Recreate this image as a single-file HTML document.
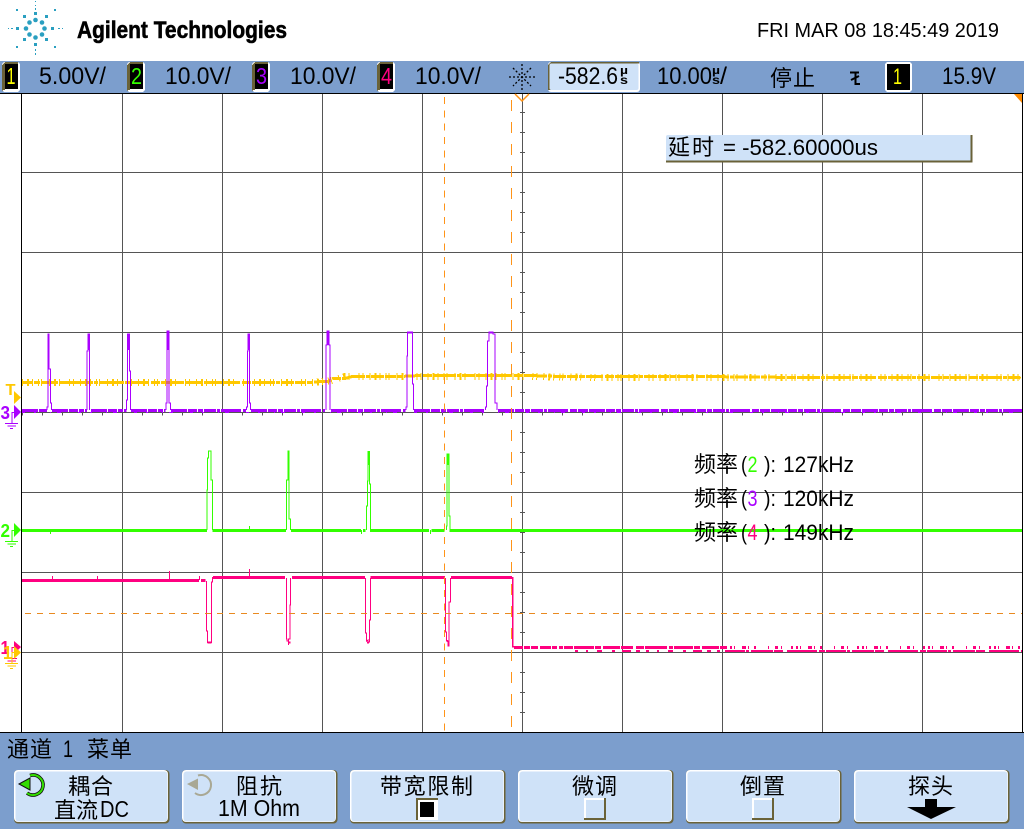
<!DOCTYPE html>
<html><head><meta charset="utf-8"><style>
html,body{margin:0;padding:0;background:#fff}
svg{display:block}
text{font-family:"Liberation Sans","WenQuanYi Zen Hei","Noto Sans CJK SC",sans-serif;fill:#000}
.g line{stroke:#555;stroke-width:1}
.c{shape-rendering:crispEdges}
</style></head><body>
<svg width="1024" height="829" viewBox="0 0 1024 829" xmlns="http://www.w3.org/2000/svg">
<rect width="1024" height="829" fill="#fff"/>
<!-- logo -->
<g fill="#2a9fc0">
<circle cx="35.500" cy="20" r="2.300"/><circle cx="42" cy="22.500" r="2.300"/><circle cx="29.500" cy="22.500" r="2.300"/><circle cx="44.500" cy="28.500" r="2.300"/><circle cx="26" cy="28.500" r="2.300"/><circle cx="29.500" cy="34.500" r="2.300"/><circle cx="42" cy="34.500" r="2.300"/><circle cx="35.500" cy="37.500" r="2.300"/>
<g class="c"><rect x="23" y="15" width="3" height="3"/><rect x="45" y="15" width="3" height="3"/><rect x="23" y="38" width="3" height="3"/><rect x="45" y="38" width="3" height="3"/><rect x="34" y="12" width="3" height="3"/><rect x="34" y="43" width="3" height="3"/><rect x="16" y="27" width="3" height="3"/><rect x="51" y="27" width="3" height="3"/>
<rect x="35" y="1" width="1" height="1"/><rect x="35" y="5" width="1" height="1"/><rect x="35" y="8" width="1" height="2"/><rect x="35" y="49" width="1" height="2"/><rect x="35" y="53" width="1" height="2"/>
<rect x="8" y="28" width="1" height="1"/><rect x="11" y="28" width="2" height="1"/><rect x="58" y="28" width="2" height="1"/><rect x="62" y="28" width="1" height="1"/>
<rect x="16" y="9" width="2" height="2"/><rect x="54" y="9" width="2" height="2"/><rect x="16" y="46" width="2" height="2"/><rect x="54" y="46" width="2" height="2"/></g>
</g>
<text x="77" y="38" font-size="24" font-weight="bold" textLength="210" lengthAdjust="spacingAndGlyphs" stroke="#000" stroke-width=".6">Agilent Technologies</text>
<text x="757" y="37" font-size="20" textLength="242" lengthAdjust="spacingAndGlyphs">FRI MAR 08 18:45:49 2019</text>

<!-- header band -->
<rect class="c" y="61" width="1024" height="32" fill="#7c9ecd"/>
<!-- bottom band -->
<rect class="c" y="733" width="1024" height="96" fill="#7c9ecd"/>

<!-- grid -->
<g class="g c">
<line x1="122.500" y1="94" x2="122.500" y2="732"/><line x1="222.500" y1="94" x2="222.500" y2="732"/><line x1="322.500" y1="94" x2="322.500" y2="732"/><line x1="422.500" y1="94" x2="422.500" y2="732"/><line x1="522.500" y1="94" x2="522.500" y2="732"/><line x1="622.500" y1="94" x2="622.500" y2="732"/><line x1="722.500" y1="94" x2="722.500" y2="732"/><line x1="822.500" y1="94" x2="822.500" y2="732"/><line x1="922.500" y1="94" x2="922.500" y2="732"/>
<line x1="22" y1="172.500" x2="1022" y2="172.500"/><line x1="22" y1="252.500" x2="1022" y2="252.500"/><line x1="22" y1="332.500" x2="1022" y2="332.500"/><line x1="22" y1="412.500" x2="1022" y2="412.500"/><line x1="22" y1="492.500" x2="1022" y2="492.500"/><line x1="22" y1="572.500" x2="1022" y2="572.500"/><line x1="22" y1="652.500" x2="1022" y2="652.500"/>
<path d="M520 112.500h5M520 132.500h5M520 152.500h5M520 192.500h5M520 212.500h5M520 232.500h5M520 272.500h5M520 292.500h5M520 312.500h5M520 352.500h5M520 372.500h5M520 392.500h5M520 432.500h5M520 452.500h5M520 472.500h5M520 512.500h5M520 532.500h5M520 552.500h5M520 592.500h5M520 612.500h5M520 632.500h5M520 672.500h5M520 692.500h5M520 712.500h5" stroke="#555" fill="none"/>
<line x1="22" y1="414" x2="1022" y2="414" stroke-dasharray="1 19" stroke-dashoffset="-20" style="stroke-width:3"/>
</g>
<g class="c" stroke="#000"><line x1="0" y1="93.500" x2="1024" y2="93.500"/><line x1="0" y1="732.500" x2="1024" y2="732.500"/><line x1="21.500" y1="93" x2="21.500" y2="733"/><line x1="1022.500" y1="93" x2="1022.500" y2="733"/></g>

<!-- yellow trace -->
<g class="c" fill="none" stroke="#ffc800">
<path d="M22 382.500H310L320 381.500H328L333 378.500H345L352 376.500H400L420 375.500H530L560 376.500H700L800 377.500H1019L1021 379" stroke-width="3" stroke-dasharray="11 1 6 1 17 2 9 1 23 1 4 1 13 1"/>
<path d="M22 382.500H310L330 381L345 376.500H530L600 377.500H1022" stroke-width="7" stroke-dasharray="1 4 2 3 1 5 1 2 1 7 1 4 2 3 1 9 1 3 1 6"/>
</g>
<!-- purple trace -->
<g fill="none" stroke="#aa00ff" class="c">
<path d="M22 410.500H47M52 410.500H87M91 410.500H126.500M131 410.500H165.500M171 410.500H246M251 410.500H325M331 410.500H405.500M414 410.500H484.500M498 410.500H1022" stroke-width="3" stroke-dasharray="16 1 9 1 5 1 12 1 3 1 20 2 7 1 10 1"/>
<path d="M22 412.500H1022" stroke-width="1" stroke-dasharray="3 9 2 14 1 6 4 17"/>
<path d="M47 410V407H48V334H49V369H50.500V403H51.500V410M87 410V351H88V334H89.500V410M126.500 410V400H127.500V334H129.500V371H130.500V410M166 410V403H167V331H169V403H170.500V410M246.500 410V407H247.500V351H248V334H249.500V403H250.500V410M326 410V345H327V331H329V345H330V410M406 410V407H407V356H407.500V332H412.500V384H413.500V410M485.500 410V407H486.500V386H487.500V341H489V332H493V334H495V403H497V410" stroke-width="1"/>
<path d="M408 332.500h4M488.500 332.500h4M48.500 334V350M88.500 334V350M128 334V350M168 331V350M248.500 334V350M328 331V345" stroke-width="2"/>
</g>
<!-- green trace -->
<g fill="none" stroke="#33ff00" class="c">
<path d="M22 530.500H207M212.500 530.500H286M291 530.500H361M363 530.500H365.500M370 530.500H429M431.500 530.500H444.500M449.500 530.500H1022" stroke-width="3"/>
<path d="M50.500 530V534M249.500 526V530M361.500 530V534M430.500 530V534" stroke-width="1"/>
<path d="M207 530V490H207.500V458H208.500V451H211V480H212.500V530" stroke-width="1"/>
<path d="M286.500 530V480H288V451H289V519H290.500V530M366.500 530V506H367.500V481H368V451.500H369.500V484H370.500V530M446.500 530V526H447V454H449V516H450V530" stroke-width="1"/>
<path d="M288.500 451V465M368.500 452V465M447.500 454V465" stroke-width="2"/>
</g>
<!-- pink trace -->
<g fill="none" stroke="#ff0080" class="c">
<path d="M22 580.500H199M201 580.500H205.500M213 577.500H285M292 577.500H365M370.500 577.500H445M451 577.500H512" stroke-width="3"/>
<path d="M52.500 576V580M97.500 576V580M169.500 571V579M199.500 576V580M249.500 569V577" stroke-width="1"/>
<path d="M206.500 581V631H207.500V642.500H211.500V582H212.500V577M286.500 578V639H287V641H288.500V645V639H290V605H290.500V578M365.500 578V633H366.500V641L368 640V642H369.500V642V620H370.500V578M445.500 578V632H446.500V641H448V646H449V602H450.500V578" stroke-width="1"/>
<path d="M207.500 642.500h4M289 642.500h1.500M367 642.500h2M447 641h1" stroke-width="2"/>
<path d="M512.500 577V646.500H515" stroke-width="1.500"/>
<path d="M514 647.500H575" stroke-width="3" stroke-dasharray="9 1 6 1 7 2 11 1 5 2 4 1"/>
<path d="M575 647.500H725" stroke-width="3" stroke-dasharray="19 1 6 2 17 1 12 3 8 1 22 2 4 1"/>
<path d="M725 647.500H1022" stroke-width="3" stroke-dasharray="2 3 2 2 1 7 4 2 1 5 2 12 1 6 3 3 1 9"/>
<path d="M575 651H725" stroke-width="2" stroke-dasharray="3 8 2 9 5 10 3 7 9 5 4 6"/>
<path d="M725 651H1022" stroke-width="2" stroke-dasharray="20 1 3 2 22 1 9 4 30 2 6 1"/>
</g>

<!-- orange markers -->
<g class="c" fill="none" stroke="#ff9418">
<line x1="444.500" y1="97" x2="444.500" y2="732" stroke-width="1" stroke-dasharray="7 6.330"/>
<line x1="511.500" y1="100" x2="511.500" y2="732" stroke-width="1" stroke-dasharray="11 11"/>
<line x1="25" y1="613.500" x2="1022" y2="613.500" stroke="#e98a20" stroke-dasharray="6 6"/>
</g>
<path d="M515 94L522 101L529 94" fill="none" stroke="#ff9418" stroke-width="1.500"/>
<path d="M1014 94H1022V103Z" fill="#ff8a00"/>

<!-- left markers -->
<text x="5.500" y="395" font-size="16" font-weight="bold" style="fill:#ffc800" textLength="10" lengthAdjust="spacingAndGlyphs">T</text>
<path d="M14 391L21 397.500L14 404Z" fill="#ffc800"/>
<text x="0.500" y="419" font-size="18" font-weight="bold" style="fill:#aa00ff" textLength="9.500" lengthAdjust="spacingAndGlyphs">3</text>
<path d="M14 405L21 412L14 419Z" fill="#aa00ff"/>
<path d="M18 412.500H12V423M5 423.500H18M7.500 426H16M10 428.500H13" fill="none" stroke="#aa00ff" stroke-width="1"/>
<text x="0.500" y="537" font-size="18" font-weight="bold" style="fill:#33ff00" textLength="9.500" lengthAdjust="spacingAndGlyphs">2</text>
<path d="M14 523L21 530L14 537Z" fill="#33ff00"/>
<path d="M18 530.500H12V541M5 541.500H18M7.500 544H16M10 546.500H13" fill="none" stroke="#33ff00" stroke-width="1"/>
<text x="0.500" y="654" font-size="18" font-weight="bold" style="fill:#ff0080" textLength="9" lengthAdjust="spacingAndGlyphs">1</text>
<path d="M14 641L21 647L14 654Z" fill="#ff0080"/>
<path d="M18 647.500H12V658M7 658.500H17M7.500 661H16" fill="none" stroke="#ff0080" stroke-width="1"/>
<text x="3" y="659" font-size="18" font-weight="bold" style="fill:#ffc800" textLength="9" lengthAdjust="spacingAndGlyphs">1</text>
<path d="M14 646L21 652.500L14 659Z" fill="#ffc800"/>
<path d="M18 652.500H12V663M5 663.500H18M7.500 666H16M10 668.500H13" fill="none" stroke="#ffc800" stroke-width="1"/>

<!-- header controls -->
<g class="c">
<rect x="2" y="62" width="18" height="30" rx="3" fill="#fff"/><path d="M2 91V65L5 62H18V64H5V90H3Z" fill="#6a6238"/><rect x="5" y="64" width="13" height="25" fill="#000"/>
<rect x="127" y="62" width="18" height="30" rx="3" fill="#fff"/><path d="M127 91V65L130 62H143V64H130V90H128Z" fill="#6a6238"/><rect x="130" y="64" width="13" height="25" fill="#000"/>
<rect x="252" y="62" width="18" height="30" rx="3" fill="#fff"/><path d="M252 91V65L255 62H268V64H255V90H253Z" fill="#6a6238"/><rect x="255" y="64" width="13" height="25" fill="#000"/>
<rect x="377" y="62" width="18" height="30" rx="3" fill="#fff"/><path d="M377 91V65L380 62H393V64H380V90H378Z" fill="#6a6238"/><rect x="380" y="64" width="13" height="25" fill="#000"/>
<rect x="885" y="62" width="27" height="30" rx="3" fill="#fff"/><rect x="887" y="64" width="23" height="26" fill="#000"/>
</g>
<text x="6.500" y="84" font-size="23" style="fill:#ffff00" textLength="9" lengthAdjust="spacingAndGlyphs">1</text>
<text x="131" y="84" font-size="23" style="fill:#33ff00" textLength="11" lengthAdjust="spacingAndGlyphs">2</text>
<text x="256" y="84" font-size="23" style="fill:#aa00ff" textLength="11" lengthAdjust="spacingAndGlyphs">3</text>
<text x="381" y="84" font-size="23" style="fill:#ff0080" textLength="11" lengthAdjust="spacingAndGlyphs">4</text>
<text x="893" y="84" font-size="22" style="fill:#ffff00" textLength="9" lengthAdjust="spacingAndGlyphs">1</text>
<text x="39" y="84" font-size="24" textLength="67" lengthAdjust="spacingAndGlyphs">5.00V/</text>
<text x="165" y="84" font-size="24" textLength="66" lengthAdjust="spacingAndGlyphs">10.0V/</text>
<text x="290" y="84" font-size="24" textLength="66" lengthAdjust="spacingAndGlyphs">10.0V/</text>
<text x="415" y="84" font-size="24" textLength="66" lengthAdjust="spacingAndGlyphs">10.0V/</text>
<path d="M522 64V90M509 77H535M513 68L531 86M531 68L513 86" stroke="#000" stroke-width="1.300" stroke-dasharray="2 2" fill="none"/>
<rect x="548" y="62" width="92" height="30" rx="3" fill="#fff"/>
<path d="M548 90V65L551 62H639V63.500H551V90Z" fill="#6a6238"/>
<rect x="549.500" y="63.500" width="89" height="26.500" rx="2" fill="#cfe2f8"/>
<text x="558" y="84" font-size="24" textLength="60" lengthAdjust="spacingAndGlyphs">-582.6</text>
<text x="620" y="74" font-size="11" font-weight="bold" textLength="8" lengthAdjust="spacingAndGlyphs">µ</text>
<text x="620" y="84" font-size="12" font-weight="bold" textLength="8" lengthAdjust="spacingAndGlyphs">s</text>
<text x="657" y="84" font-size="24" textLength="55" lengthAdjust="spacingAndGlyphs">10.00</text>
<text x="712" y="74" font-size="11" font-weight="bold" textLength="8" lengthAdjust="spacingAndGlyphs">µ</text>
<text x="712" y="84" font-size="12" font-weight="bold" textLength="8" lengthAdjust="spacingAndGlyphs">s</text>
<text x="720" y="84" font-size="24" textLength="7" lengthAdjust="spacingAndGlyphs">/</text>
<text x="770" y="86" font-size="22" textLength="45" lengthAdjust="spacing">停止</text>
<path d="M850 72.500H859M855.500 72V84H860M851 80L859 76" fill="none" stroke="#000" stroke-width="2"/>
<text x="942" y="84" font-size="24" textLength="54" lengthAdjust="spacingAndGlyphs">15.9V</text>

<!-- delay box -->
<rect x="666" y="135" width="305" height="26.500" rx="2" fill="#cfe2f8"/>
<path d="M666 161.500H971.500V135" fill="none" stroke="#6a6238" stroke-width="2"/>
<text x="668" y="155" font-size="22" textLength="46" lengthAdjust="spacing">延时</text>
<text x="723" y="155" font-size="22" textLength="155" lengthAdjust="spacingAndGlyphs">= -582.60000us</text>

<!-- frequency -->
<text x="694" y="472" font-size="22" textLength="44" lengthAdjust="spacing">频率</text>
<text x="741" y="472" font-size="22" textLength="6" lengthAdjust="spacingAndGlyphs">(</text>
<text x="747.500" y="472" font-size="22" style="fill:#33ff00" textLength="10" lengthAdjust="spacingAndGlyphs">2</text>
<text x="764" y="472" font-size="22" textLength="12" lengthAdjust="spacingAndGlyphs">):</text>
<text x="783" y="472" font-size="22" textLength="71" lengthAdjust="spacingAndGlyphs">127kHz</text>
<text x="694" y="506" font-size="22" textLength="44" lengthAdjust="spacing">频率</text>
<text x="741" y="506" font-size="22" textLength="6" lengthAdjust="spacingAndGlyphs">(</text>
<text x="747.500" y="506" font-size="22" style="fill:#aa00ff" textLength="10" lengthAdjust="spacingAndGlyphs">3</text>
<text x="764" y="506" font-size="22" textLength="12" lengthAdjust="spacingAndGlyphs">):</text>
<text x="783" y="506" font-size="22" textLength="71" lengthAdjust="spacingAndGlyphs">120kHz</text>
<text x="694" y="540" font-size="22" textLength="44" lengthAdjust="spacing">频率</text>
<text x="741" y="540" font-size="22" textLength="6" lengthAdjust="spacingAndGlyphs">(</text>
<text x="747.500" y="540" font-size="22" style="fill:#ff0080" textLength="10" lengthAdjust="spacingAndGlyphs">4</text>
<text x="764" y="540" font-size="22" textLength="12" lengthAdjust="spacingAndGlyphs">):</text>
<text x="783" y="540" font-size="22" textLength="71" lengthAdjust="spacingAndGlyphs">149kHz</text>

<!-- bottom -->
<text x="7" y="757" font-size="22" textLength="45" lengthAdjust="spacing">通道</text>
<text x="63" y="757" font-size="24" textLength="10" lengthAdjust="spacingAndGlyphs">1</text>
<text x="87" y="757" font-size="22" textLength="45" lengthAdjust="spacing">菜单</text>

<g>
<rect x="14" y="770" width="155.500" height="53.500" rx="4" fill="#6a6238"/><rect x="14" y="770" width="154" height="52" rx="4" fill="#fff"/><rect x="15.500" y="771.500" width="152" height="50" rx="3" fill="#cfe2f8"/>
<rect x="182" y="770" width="155.500" height="53.500" rx="4" fill="#6a6238"/><rect x="182" y="770" width="154" height="52" rx="4" fill="#fff"/><rect x="183.500" y="771.500" width="152" height="50" rx="3" fill="#cfe2f8"/>
<rect x="350" y="770" width="155.500" height="53.500" rx="4" fill="#6a6238"/><rect x="350" y="770" width="154" height="52" rx="4" fill="#fff"/><rect x="351.500" y="771.500" width="152" height="50" rx="3" fill="#cfe2f8"/>
<rect x="518" y="770" width="155.500" height="53.500" rx="4" fill="#6a6238"/><rect x="518" y="770" width="154" height="52" rx="4" fill="#fff"/><rect x="519.500" y="771.500" width="152" height="50" rx="3" fill="#cfe2f8"/>
<rect x="686" y="770" width="155.500" height="53.500" rx="4" fill="#6a6238"/><rect x="686" y="770" width="154" height="52" rx="4" fill="#fff"/><rect x="687.500" y="771.500" width="152" height="50" rx="3" fill="#cfe2f8"/>
<rect x="854" y="770" width="155.500" height="53.500" rx="4" fill="#6a6238"/><rect x="854" y="770" width="154" height="52" rx="4" fill="#fff"/><rect x="855.500" y="771.500" width="152" height="50" rx="3" fill="#cfe2f8"/>
</g>

<path d="M30 775.500A10 10 0 1 1 27 793" fill="none" stroke="#111" stroke-width="3.600"/>
<path d="M30 775.500A10 10 0 1 1 27 793" fill="none" stroke="#33dd00" stroke-width="2"/>
<path d="M19 784L30 778V790Z" fill="#33dd00" stroke="#111" stroke-width="1"/>
<path d="M198 775.500A10 10 0 1 1 195 793" fill="none" stroke="#a9a894" stroke-width="2"/>
<path d="M187 784L198 778.500V790Z" fill="#a9a894"/>

<text x="68" y="794" font-size="22" textLength="45" lengthAdjust="spacing">耦合</text>
<text x="54" y="818" font-size="22" textLength="44" lengthAdjust="spacing">直流</text>
<text x="100" y="817" font-size="23" textLength="29" lengthAdjust="spacingAndGlyphs">DC</text>
<text x="236" y="794" font-size="22" textLength="46" lengthAdjust="spacing">阻抗</text>
<text x="218" y="816" font-size="23" textLength="82" lengthAdjust="spacingAndGlyphs">1M Ohm</text>
<text x="380" y="794" font-size="22" textLength="93" lengthAdjust="spacing">带宽限制</text>
<text x="572" y="794" font-size="22" textLength="45" lengthAdjust="spacing">微调</text>
<text x="740" y="794" font-size="22" textLength="45" lengthAdjust="spacing">倒置</text>
<text x="908" y="794" font-size="22" textLength="45" lengthAdjust="spacing">探头</text>

<g class="c">
<rect x="416" y="798" width="22" height="22" fill="#fff"/><path d="M416 820V798H438V800H418V820Z" fill="#6a6238"/><rect x="420" y="802" width="14" height="15" fill="#000"/>
<rect x="584" y="798" width="22" height="22" fill="#6a6238"/><rect x="584" y="798" width="20" height="20" fill="#fff"/><rect x="586" y="800" width="18" height="18" fill="#cfe2f8"/>
<rect x="752" y="798" width="22" height="22" fill="#6a6238"/><rect x="752" y="798" width="20" height="20" fill="#fff"/><rect x="754" y="800" width="18" height="18" fill="#cfe2f8"/>
</g>
<path d="M925 799H937V807H956L931 819L907 807H925Z" fill="#000"/>
</svg>
</body></html>
